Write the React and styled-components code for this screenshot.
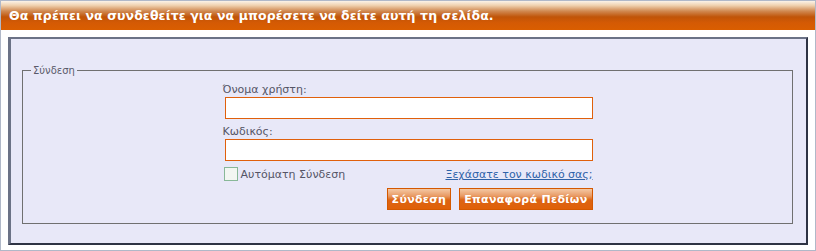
import styled, { createGlobalStyle } from 'styled-components';

const Global = createGlobalStyle`
    body {
        margin: 0;
        background: #ffffff;
        font-family: "DejaVu Sans", Verdana, sans-serif;
    }
`;

const Frame = styled.div`
    width: 816px;
    height: 251px;
    box-sizing: border-box;
    border: 1px solid #b0b8c8;
    background: #ffffff;
    display: flex;
    flex-direction: column;
`;

const Header = styled.div`
    height: 29px;
    display: flex;
    align-items: center;
    padding: 0 8px;
    background: linear-gradient(to bottom, #fbf3e8 0%, #f0d2b0 15%, #d08850 35%, #c05408 55%, #d45a04 75%, #da5e00 100%);
    color: #ffffff;
    font-weight: bold;
    font-size: 12.5px;
    letter-spacing: 0.1px;
`;

const Panel = styled.div`
    flex: 1;
    margin: 7px 7px 5px 7px;
    background: #e8e8f8;
    border-style: solid;
    border-width: 2px 2px 2px 3px;
    border-color: #6b7286 #2e3344 #2e3344 #6b7286;
    padding: 26px 13px 19px 11px;
    display: flex;
`;

const Fieldset = styled.fieldset`
    flex: 1;
    margin: 0;
    border: 1px solid #707070;
    padding: 7px 8px 8px 8px;
    display: flex;
    justify-content: center;
`;

const Legend = styled.legend`
    font-size: 10px;
    color: #5a5a6a;
    padding: 0 2px;
`;

const Form = styled.div`
    width: 368px;
    margin-left: 2px;
    display: flex;
    flex-direction: column;
`;

const Label = styled.label`
    font-size: 11px;
    line-height: 14px;
    color: #555566;
    margin-left: -2px;
    margin-top: ${p => p.$gap || 0}px;
`;

const Input = styled.input`
    height: 22px;
    box-sizing: border-box;
    border: 1px solid #e0600c;
    background: #ffffff;
    width: 100%;
    margin: 0;
    padding: 2px 4px;
`;

const Row = styled.div`
    display: flex;
    align-items: center;
    justify-content: space-between;
    margin-top: 6px;
    height: 14px;
`;

const Check = styled.label`
    display: flex;
    align-items: center;
    gap: 3px;
    font-size: 11px;
    color: #555566;
    margin-left: -1px;
`;

const Box = styled.span`
    width: 12px;
    height: 12px;
    border: 1px solid #88b898;
    background: #f2f6f2;
`;

const Link = styled.a`
    font-size: 11px;
    color: #2e62a8;
    text-decoration: underline;
`;

const Buttons = styled.div`
    display: flex;
    justify-content: flex-end;
    gap: 8px;
    margin-top: 7px;
`;

const Button = styled.button`
    height: 22px;
    box-sizing: border-box;
    padding: 0 4px;
    border: 1px solid #d45800;
    background: linear-gradient(to bottom, #f4c8a4 0%, #e89a64 35%, #dc6414 55%, #e06008 100%);
    color: #ffffff;
    font-family: "DejaVu Sans", Verdana, sans-serif;
    font-weight: bold;
    font-size: 11px;
    letter-spacing: 0.3px;
    cursor: pointer;
`;

export default function App() {
    return (
        <>
            <Global />
            <Frame>
                <Header>Θα πρέπει να συνδεθείτε για να μπορέσετε να δείτε αυτή τη σελίδα.</Header>
                <Panel>
                    <Fieldset>
                        <Legend>Σύνδεση</Legend>
                        <Form>
                            <Label>Όνομα χρήστη:</Label>
                            <Input type="text" />
                            <Label $gap={6}>Κωδικός:</Label>
                            <Input type="password" />
                            <Row>
                                <Check><Box />Αυτόματη Σύνδεση</Check>
                                <Link href="#">Ξεχάσατε τον κωδικό σας;</Link>
                            </Row>
                            <Buttons>
                                <Button>Σύνδεση</Button>
                                <Button>Επαναφορά Πεδίων</Button>
                            </Buttons>
                        </Form>
                    </Fieldset>
                </Panel>
            </Frame>
        </>
    );
}
